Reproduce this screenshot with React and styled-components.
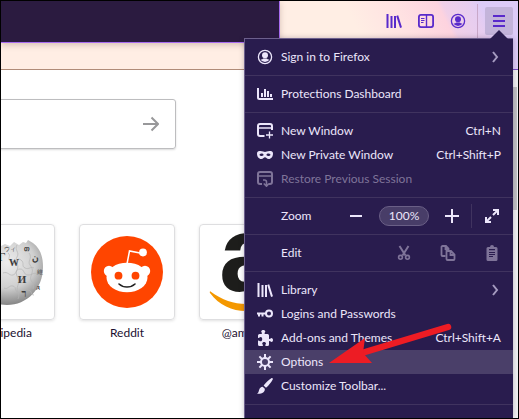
import React from 'react';
import styled, { createGlobalStyle } from 'styled-components';

const GlobalStyle = createGlobalStyle`
  * {
    box-sizing: border-box;
  }

  body {
    margin: 0;
    font-family: Lato, 'Noto Sans', sans-serif;
    font-size: 12px;
    line-height: 16px;
  }

  button {
    margin: 0;
    padding: 0;
    border: 0;
    background: none;
    color: inherit;
    font: inherit;
  }

  svg {
    display: block;
    flex: none;
  }
`;

const Window = styled.div`
  position: relative;
  display: flex;
  flex-direction: column;
  min-height: 100vh;
  border: 1px solid #000;
  background: #fff;
  overflow: hidden;
`;

const Toolbar = styled.header`
  display: flex;
  justify-content: flex-end;
  align-items: flex-start;
  gap: 4px;
  height: 69px;
  padding: 6px 5px 0 0;
  border-bottom: 1px solid;
  border-image: linear-gradient(90deg, #b08c78 60%, #7a4cc8 95%) 1;
  background:
    linear-gradient(64deg, #ffeee4 36%, #ffe2e2 54%, #fdd3df 70%, #f0d0e8 72%, #e6cdf0 82%, #dccbf7 86%)
      right top / 240px 69px no-repeat,
    #ffeee4;
`;

const ToolButton = styled.button`
  display: flex;
  align-items: center;
  justify-content: center;
  width: 28px;
  height: 28px;
  border-radius: 2px;
  color: #592acb;
  background: ${({ $open }) => ($open ? '#c3b4da' : 'transparent')};
`;

const ToolDivider = styled.div`
  width: 1px;
  height: 34px;
  margin: -3px 3px 0 1px;
  background: #c9a8c8;
`;

const AddressPopup = styled.div`
  position: absolute;
  top: 0;
  left: 0;
  width: 279px;
  height: 42px;
  border-right: 1px solid #a86cf0;
  border-bottom: 1px solid #a86cf0;
  background: #2b1b40;
  box-shadow: 0 2px 6px rgba(90, 60, 40, 0.25);
`;

const Content = styled.div`
  display: flex;
  flex: 1;
`;

const NewTab = styled.main`
  flex: 1;
  min-width: 0;
  padding-top: 29px;
  margin-left: -42px;
`;

const SearchBox = styled.form`
  display: flex;
  align-items: center;
  width: 217px;
  height: 50px;
  padding-right: 16px;
  border: 1px solid #bdbdbf;
  border-radius: 3px;
  box-shadow: 0 1px 2px rgba(0, 0, 0, 0.15);
  color: #98989a;
`;

const SearchInput = styled.input`
  flex: 1;
  min-width: 0;
  border: 0;
  outline: 0;
  background: none;
  font: inherit;
`;

const TopSites = styled.nav`
  display: flex;
  gap: 24px;
  margin-top: 75px;
`;

const Site = styled.a`
  flex: none;
  width: 96px;
  color: #1c1030;
  text-align: center;
  text-decoration: none;
`;

const Tile = styled.div`
  height: 96px;
  margin-bottom: 5px;
  border: 1px solid #dedee0;
  border-radius: 4px;
  box-shadow: 0 1px 3px rgba(0, 0, 0, 0.12);
`;

const Scrollbar = styled.div`
  width: 5px;
  padding: 17px 1px 0 0;
  background: #f0f0f1;
`;

const Thumb = styled.div`
  height: 123px;
  background: #c1c1c3;
`;

const Menu = styled.div`
  position: absolute;
  top: 37px;
  right: 5px;
  bottom: 0;
  width: 269px;
  border-top: 1px solid #6c5f8c;
  border-left: 1px solid #6c5f8c;
  background: #291c4e;
  color: #ece6fb;
  box-shadow: 0 0 5px rgba(40, 20, 60, 0.28);
`;

const MenuPointer = styled.div`
  position: absolute;
  top: -9px;
  right: 5px;
  border: 9px solid transparent;
  border-top: 0;
  border-bottom-color: #291c4e;
`;

const Section = styled.div`
  padding: 6px 0;
  border-bottom: 1px solid #40335f;
`;

const Item = styled.button`
  display: flex;
  align-items: center;
  gap: 8px;
  width: 100%;
  height: 24px;
  padding: 0 12px;
  text-align: left;
  background: ${({ $active }) => ($active ? '#4a3f69' : 'transparent')};

  &:disabled {
    color: #7f7499;
  }
`;

const Label = styled.span`
  flex: 1;
  white-space: nowrap;
`;

const ControlRow = styled.div`
  display: flex;
  align-items: center;
  gap: ${({ $gap }) => $gap}px;
  height: 24px;
  padding: 0 7px 0 36px;
`;

const IconButton = styled.button`
  display: flex;
  align-items: center;
  justify-content: center;
  width: 28px;
  height: 24px;

  &:disabled {
    color: #7f7499;
  }
`;

const ZoomLevel = styled.button`
  width: 50px;
  height: 20px;
  border: 1px solid #6a5f86;
  border-radius: 10px;
  background: #483d68;
  line-height: 16px;
`;

const ControlDivider = styled.div`
  width: 1px;
  height: 24px;
  margin: 0 -3px 0 -4px;
  background: #40335f;
`;

const Pointer = styled.svg`
  position: absolute;
  top: 283px;
  left: 84px;
  pointer-events: none;
`;

const Icon = ({ children }) => (
  <svg width='16' height='16' viewBox='0 0 16 16' fill='none' stroke='currentColor' strokeWidth='2' aria-hidden='true'>
    {children}
  </svg>
);

const LibraryIcon = () => (
  <Icon>
    <path d='M1.500 1v14M5.500 3v12M9 3v12M11.200 2.600L15 14.600' />
  </Icon>
);

const SidebarIcon = () => (
  <Icon>
    <rect x='0.900' y='1.900' width='14.200' height='12.200' rx='2' strokeWidth='1.800' />
    <path d='M8.500 2v12' strokeWidth='1.400' />
    <path d='M3 5.500h3.500M3 7.500h3.500M3 9.500h2.500' strokeWidth='1' />
  </Icon>
);

const AccountIcon = () => (
  <Icon>
    <circle cx='8' cy='8' r='6.600' strokeWidth='1.300' />
    <circle cx='8' cy='6.300' r='3' fill='currentColor' stroke='none' />
    <path d='M3.400 10.200c1 .6 1.900.2 2.800-.6h3.600c.9.8 1.800 1.200 2.800.6A5.200 5.200 0 0 1 8 13.100a5.200 5.200 0 0 1-4.600-2.900z' fill='currentColor' stroke='none' />
  </Icon>
);

const HamburgerIcon = () => (
  <Icon>
    <path d='M2 3h12M2 8h12M2 13h12' />
  </Icon>
);

const ChartIcon = () => (
  <Icon>
    <path d='M1 2v9.500a1.500 1.500 0 0 0 1.500 1.500H16' />
    <path d='M5 11V7M8 11V3M11 11V5M14 11V8' />
  </Icon>
);

const NewWindowIcon = () => (
  <Icon>
    <path d='M7.500 13H3a2 2 0 0 1-2-2V3a2 2 0 0 1 2-2h10a2 2 0 0 1 2 2v4' />
    <path d='M1 5h14' strokeWidth='1.500' />
    <path d='M12.500 8.500v7M9 12h7' strokeWidth='1.300' />
  </Icon>
);

const MaskIcon = () => (
  <Icon>
    <path
      d='M3.500 4C1.300 4 0 4.500 0 6.500 0 9.700 1.800 12 4.300 12 6.400 12 6.800 10.300 8 10.300S9.600 12 11.700 12C14.200 12 16 9.700 16 6.500 16 4.500 14.700 4 12.500 4 10.300 4 9.200 5 8 5S5.700 4 3.500 4zM4.600 9C3.400 9 2.600 8.300 2.400 7.700 3 7 3.700 6.600 4.600 6.600 5.800 6.600 6.500 7.300 6.700 8.100 6.100 8.700 5.500 9 4.600 9zm6.800 0c-.9 0-1.500-.3-2.100-.9.2-.8.900-1.500 2.100-1.500.9 0 1.600.4 2.200 1.100-.2.600-1 1.300-2.200 1.300z'
      fill='currentColor'
      fillRule='evenodd'
      stroke='none'
    />
  </Icon>
);

const RestoreIcon = () => (
  <Icon>
    <path d='M5 13H3a2 2 0 0 1-2-2V3a2 2 0 0 1 2-2h10a2 2 0 0 1 2 2v8a2 2 0 0 1-2 2h-1' />
    <path d='M1 5h14' strokeWidth='1.500' />
    <path d='M6 9h1.500a2 2 0 0 1 2 2v3.500M6.800 12.500l2.700 2.700 2.500-2.700' strokeWidth='1.600' />
  </Icon>
);

const ChevronIcon = () => (
  <Icon>
    <path d='M8 3l4 5-4 5' stroke='#a59bc0' />
  </Icon>
);

const MinusIcon = () => (
  <Icon>
    <path d='M2 8h12' />
  </Icon>
);

const PlusIcon = () => (
  <Icon>
    <path d='M1 8h14M8 1v14' />
  </Icon>
);

const FullscreenIcon = () => (
  <Icon>
    <path d='M9 2h5v5M7 14H2V9M14 2L9 7M2 14l5-5' />
  </Icon>
);

const CutIcon = () => (
  <Icon>
    <path d='M3.500 1l6 9.500M12.500 1l-6 9.500' />
    <circle cx='4.500' cy='12.300' r='1.900' strokeWidth='1.600' />
    <circle cx='11.500' cy='12.300' r='1.900' strokeWidth='1.600' />
  </Icon>
);

const CopyIcon = () => (
  <Icon>
    <path d='M5.500 11H2.500a1 1 0 0 1-1-1V2a1 1 0 0 1 1-1H6l2.500 2.500V5M5.500 1v3h3' strokeWidth='1.800' />
    <path d='M7 6h4l3.500 3.500V14a1 1 0 0 1-1 1H7.500a1 1 0 0 1-1-1V6zM10.500 6v4h4' strokeWidth='1.800' />
  </Icon>
);

const PasteIcon = () => (
  <Icon>
    <path
      d='M4 2h2a2 2 0 0 1 4 0h2a1.500 1.500 0 0 1 1.500 1.500v11A1.500 1.500 0 0 1 12 16H4a1.500 1.500 0 0 1-1.500-1.500v-11A1.500 1.500 0 0 1 4 2zM5 4v1.200h6V4zM5 7v1h6V7zM5 9v1h6V9zM5 11v1h4v-1z'
      fill='currentColor'
      fillRule='evenodd'
      stroke='none'
    />
  </Icon>
);

const KeyIcon = () => (
  <Icon>
    <circle cx='12' cy='7.500' r='3' />
    <path d='M9 7.500H0M2 7.500v3M5.500 7.500v3' />
  </Icon>
);

const PuzzleIcon = () => (
  <Icon>
    <path
      d='M14.500 8c-.9 0-1 1-1.700 1C12 9 12 8.500 12 8V5.500A1.500 1.500 0 0 0 10.500 4H8.500C8 4 7.500 4 7.500 3.300 7.500 2.600 8.300 2.400 8.300 1.500 8.300.6 7.400 0 6.300 0S4.200.6 4.200 1.500c0 .9.800 1.100.8 1.800C5 4 4.500 4 4 4H2.500A1.500 1.500 0 0 0 1 5.500V7c0 .6 0 1 .7 1s.9-.9 1.900-.9S5.200 8 5.200 9.200s-.7 2.100-1.600 2.100-1.200-.9-1.900-.9S1 11 1 11.400V14.500A1.500 1.500 0 0 0 2.500 16H5c.5 0 1 0 1-.7s-.8-.9-.8-1.800.9-1.500 1.900-1.500 1.900.6 1.900 1.500-.8 1.100-.8 1.800.5.7 1 .7h1.300a1.500 1.500 0 0 0 1.500-1.500V12c0-.5 0-1 .8-1s.8 1 1.700 1S16 11 16 10s-.6-2-1.500-2z'
      fill='currentColor'
      stroke='none'
    />
  </Icon>
);

const GearIcon = () => (
  <Icon>
    <circle cx='8' cy='8' r='4' />
    <path d='M8 0v4M8 12v4M0 8h4M12 8h4M2.400 2.400l2.800 2.800M10.800 10.800l2.800 2.800M13.600 2.400l-2.800 2.800M5.200 10.800l-2.800 2.800' />
  </Icon>
);

const BrushIcon = () => (
  <Icon>
    <path
      d='M14.300.3c.8-.6 1.900.4 1.400 1.300-1.500 2.900-3.900 6-6.700 8.200L6.600 7.500C8.700 4.700 11.500 2.200 14.300.3zM5.700 8.700l2.100 2.100c.2 2.700-1.900 5.200-7.800 4.900 1.500-1 1.600-2 2-3.500.6-2.100 1.900-3.400 3.700-3.500z'
      fill='currentColor'
      stroke='none'
    />
  </Icon>
);

const SubmitArrow = () => (
  <svg width='16' height='16' viewBox='0 0 16 16' fill='none' stroke='currentColor' strokeWidth='2' aria-hidden='true'>
    <path d='M0 8h15M8.500 1.500L15 8l-6.500 6.500' />
  </svg>
);

const WikipediaLogo = () => (
  <svg width='94' height='94' viewBox='0 0 94 94' aria-hidden='true'>
    <defs>
      <radialGradient id='globe' cx='0.500' cy='0.350' r='0.650'>
        <stop offset='0' stopColor='#ededed' />
        <stop offset='0.600' stopColor='#cfcfcf' />
        <stop offset='1' stopColor='#858585' />
      </radialGradient>
    </defs>
    <path
      d='M12 35C18 22 27 17 35 18l4 4 6-3 5 2 4-4 5 3 4-3 3 1 2-3 5 3c8 6 10 15 10 24 0 22-16 38-36 38S11 67 11 46c0-4 0-8 1-11z'
      fill='url(#globe)'
    />
    <path
      d='M48 28c4 3-2 6 3 8s6-4 10-1 0 6 4 8 6-2 9 0M43 48c5-2 6 3 10 2s2-6 7-6 3 6 8 6 5-3 9-1M44 63c4 2 5-3 9-2s1 6 6 7 4-4 9-3 2 5 6 5M57 20c-3 5 3 7 0 12s3 7 0 13 4 8 1 15 3 8 0 14M69 28c4 5-2 8 1 12s3 6 1 11 4 7 2 13'
      fill='none'
      stroke='#b4b4b4'
      strokeWidth='0.700'
    />
    <g fill='#3c3c3c' fontFamily='Liberation Serif, serif' textAnchor='middle'>
      <text x='42' y='36' fontSize='12'>Г</text>
      <text x='54' y='41' fontSize='10' fontWeight='700'>W</text>
      <text x='62' y='58' fontSize='11' fontWeight='700'>И</text>
      <text x='50' y='26' fontSize='6'>ウィ</text>
      <text x='67' y='26' fontSize='7' fontWeight='700'>თ</text>
      <text x='75' y='36' fontSize='9' fontWeight='700'>ن</text>
      <text x='80' y='49' fontSize='6'>維</text>
      <text x='64' y='72' fontSize='10' fontWeight='700'>ר</text>
      <text x='78' y='64' fontSize='7' fontWeight='700'>д</text>
    </g>
  </svg>
);

const RedditLogo = () => (
  <svg width='94' height='94' viewBox='0 0 94 94' aria-hidden='true'>
    <circle cx='47' cy='47' r='36' fill='#ff4500' />
    <path d='M47 39l2.500-13 13 2.500' fill='none' stroke='#fff' strokeWidth='1.500' />
    <g fill='#fff'>
      <circle cx='63' cy='27.500' r='3.900' />
      <circle cx='29' cy='46' r='5.200' />
      <circle cx='65' cy='46' r='5.200' />
      <ellipse cx='47' cy='52.500' rx='20.500' ry='14.800' />
    </g>
    <circle cx='38.500' cy='50.700' r='3.900' fill='#ff4500' />
    <circle cx='55.500' cy='50.700' r='3.900' fill='#ff4500' />
    <path d='M39 59c4.500 4 11.500 4 16 0' fill='none' stroke='#222' strokeWidth='1.600' strokeLinecap='round' />
  </svg>
);

const AmazonLogo = () => (
  <svg width='94' height='94' viewBox='0 0 94 94' aria-hidden='true'>
    <text x='19' y='66' fill='#1d1d1b' fontFamily='Liberation Sans, Arial, sans-serif' fontSize='108' fontWeight='700'>
      a
    </text>
    <path d='M10.500 66.500C22 75 34 79 46 79c10 0 20-2 30-6 3-1 4 1 2 3-8 7-20 10-32 10-14 0-27-6-36-18-.5-1 0-2 .5-1.500z' fill='#f49800' />
  </svg>
);

const sites = [
  { label: 'wikipedia', logo: <WikipediaLogo /> },
  { label: 'Reddit', logo: <RedditLogo /> },
  { label: '@amazon', logo: <AmazonLogo /> },
];

const windowItems = [
  { label: 'New Window', icon: <NewWindowIcon />, shortcut: 'Ctrl+N' },
  { label: 'New Private Window', icon: <MaskIcon />, shortcut: 'Ctrl+Shift+P' },
  { label: 'Restore Previous Session', icon: <RestoreIcon />, disabled: true },
];

const toolItems = [
  { label: 'Library', icon: <LibraryIcon />, submenu: true },
  { label: 'Logins and Passwords', icon: <KeyIcon /> },
  { label: 'Add-ons and Themes', icon: <PuzzleIcon />, shortcut: 'Ctrl+Shift+A' },
  { label: 'Options', icon: <GearIcon />, active: true },
  { label: 'Customize Toolbar...', icon: <BrushIcon /> },
];

const MenuItem = ({ item }) => (
  <Item type='button' disabled={item.disabled} $active={item.active}>
    {item.icon}
    <Label>{item.label}</Label>
    {item.shortcut && <span>{item.shortcut}</span>}
    {item.submenu && <ChevronIcon />}
  </Item>
);

const AppMenu = () => (
  <Menu>
    <MenuPointer />
    <Section>
      <MenuItem item={{ label: 'Sign in to Firefox', icon: <AccountIcon />, submenu: true }} />
    </Section>
    <Section>
      <MenuItem item={{ label: 'Protections Dashboard', icon: <ChartIcon /> }} />
    </Section>
    <Section>
      {windowItems.map((item) => (
        <MenuItem item={item} key={item.label} />
      ))}
    </Section>
    <Section>
      <ControlRow $gap={9}>
        <Label>Zoom</Label>
        <IconButton type='button' aria-label='Zoom out'>
          <MinusIcon />
        </IconButton>
        <ZoomLevel type='button'>100%</ZoomLevel>
        <IconButton type='button' aria-label='Zoom in'>
          <PlusIcon />
        </IconButton>
        <ControlDivider />
        <IconButton type='button' aria-label='Full screen'>
          <FullscreenIcon />
        </IconButton>
      </ControlRow>
    </Section>
    <Section>
      <ControlRow $gap={16}>
        <Label>Edit</Label>
        <IconButton type='button' aria-label='Cut' disabled>
          <CutIcon />
        </IconButton>
        <IconButton type='button' aria-label='Copy' disabled>
          <CopyIcon />
        </IconButton>
        <IconButton type='button' aria-label='Paste' disabled>
          <PasteIcon />
        </IconButton>
      </ControlRow>
    </Section>
    <Section>
      {toolItems.map((item) => (
        <MenuItem item={item} key={item.label} />
      ))}
    </Section>
    <Pointer width='124' height='44' viewBox='0 0 124 44' aria-hidden='true'>
      <path d='M36 30l83-25' stroke='#ed1c24' strokeWidth='6.500' strokeLinecap='round' />
      <path d='M0 41l36-25-2 15 9 10z' fill='#ed1c24' />
    </Pointer>
  </Menu>
);

const App = () => (
  <>
    <GlobalStyle />
    <Window>
      <Toolbar>
        <ToolButton type='button' aria-label='Library'>
          <LibraryIcon />
        </ToolButton>
        <ToolButton type='button' aria-label='Sidebars'>
          <SidebarIcon />
        </ToolButton>
        <ToolButton type='button' aria-label='Account'>
          <AccountIcon />
        </ToolButton>
        <ToolDivider />
        <ToolButton type='button' aria-label='Open menu' $open>
          <HamburgerIcon />
        </ToolButton>
      </Toolbar>
      <AddressPopup />
      <Content>
        <NewTab>
          <SearchBox>
            <SearchInput type='search' aria-label='Search the Web' />
            <button type='submit' aria-label='Search'>
              <SubmitArrow />
            </button>
          </SearchBox>
          <TopSites>
            {sites.map((site) => (
              <Site href='#' key={site.label}>
                <Tile>{site.logo}</Tile>
                {site.label}
              </Site>
            ))}
          </TopSites>
        </NewTab>
        <Scrollbar>
          <Thumb />
        </Scrollbar>
      </Content>
      <AppMenu />
    </Window>
  </>
);

export default App;
